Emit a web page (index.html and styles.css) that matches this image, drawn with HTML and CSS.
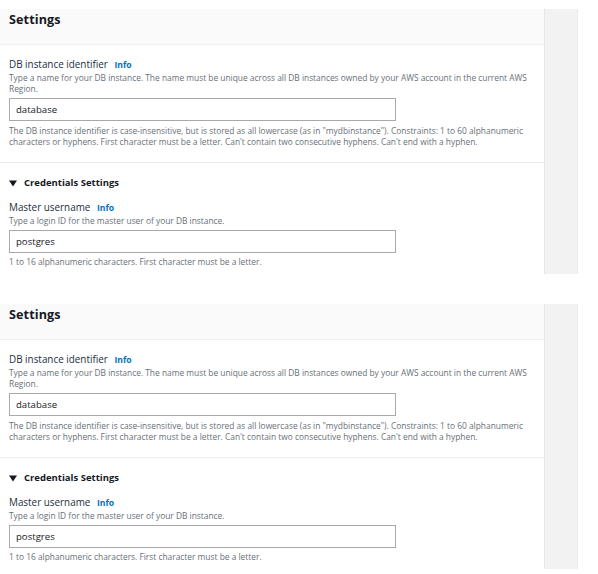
FILE: index.html
```html
<!DOCTYPE html>
<html>
<head>
<meta charset="utf-8">
<link rel="stylesheet" href="styles.css">
</head>
<body>
<div class="page">
  <div class="shot">
    <div class="panel">
      <div class="header"><h2 class="title">Settings</h2></div>
      <div class="section first">
        <div class="label">DB instance identifier <span class="info">Info</span></div>
        <div class="desc">Type a name for your DB instance. The name must be unique across all DB instances owned by your AWS account in the current AWS<br>Region.</div>
        <div class="input">database</div>
        <div class="hint">The DB instance identifier is case-insensitive, but is stored as all lowercase (as in "mydbinstance"). Constraints: 1 to 60 alphanumeric<br>characters or hyphens. First character must be a letter. Can't contain two consecutive hyphens. Can't end with a hyphen.</div>
      </div>
      <div class="section second">
        <div class="expander"><svg class="caret" width="8" height="7" viewBox="0 0 8 7"><path d="M0 0.5 H8 L4 6.5 Z" fill="#16191f"/></svg>Credentials Settings</div>
        <div class="label mt">Master username <span class="info">Info</span></div>
        <div class="desc">Type a login ID for the master user of your DB instance.</div>
        <div class="input">postgres</div>
        <div class="hint short">1 to 16 alphanumeric characters. First character must be a letter.</div>
      </div>
    </div>
    <div class="side"></div>
  </div>
  <div class="shot">
    <div class="panel">
      <div class="header"><h2 class="title">Settings</h2></div>
      <div class="section first">
        <div class="label">DB instance identifier <span class="info">Info</span></div>
        <div class="desc">Type a name for your DB instance. The name must be unique across all DB instances owned by your AWS account in the current AWS<br>Region.</div>
        <div class="input">database</div>
        <div class="hint">The DB instance identifier is case-insensitive, but is stored as all lowercase (as in "mydbinstance"). Constraints: 1 to 60 alphanumeric<br>characters or hyphens. First character must be a letter. Can't contain two consecutive hyphens. Can't end with a hyphen.</div>
      </div>
      <div class="section second">
        <div class="expander"><svg class="caret" width="8" height="7" viewBox="0 0 8 7"><path d="M0 0.5 H8 L4 6.5 Z" fill="#16191f"/></svg>Credentials Settings</div>
        <div class="label mt">Master username <span class="info">Info</span></div>
        <div class="desc">Type a login ID for the master user of your DB instance.</div>
        <div class="input">postgres</div>
        <div class="hint short">1 to 16 alphanumeric characters. First character must be a letter.</div>
      </div>
    </div>
    <div class="side"></div>
  </div>
</div>
</body>
</html>
```

FILE: styles.css
```css
html, body {
  margin: 0;
  padding: 0;
  background: #ffffff;
}
body {
  font-family: "Open Sans", "Noto Sans", sans-serif;
  color: #16191f;
  width: 598px;
  height: 574px;
  overflow: hidden;
}
.page {
  padding-top: 9px;
  display: flex;
  flex-direction: column;
  gap: 30px;
}
.shot {
  display: flex;
  height: 265px;
}
.panel {
  width: 544px;
  background: #ffffff;
  display: flex;
  flex-direction: column;
}
.side {
  width: 34px;
  background: #f2f2f2;
  border-left: 1px solid #e6e6e6;
  border-right: 1px solid #ebebeb;
  box-sizing: border-box;
}
.header {
  height: 36px;
  background: #fafafa;
  border-bottom: 1px solid #f0f0f0;
  box-sizing: border-box;
  padding: 1px 9px 0;
}
.title {
  margin: 0;
  font-size: 12.6px;
  line-height: 20px;
  font-weight: 700;
  letter-spacing: 0.1px;
}
.section {
  padding: 0 9px;
}
.section.first {
  padding-top: 13px;
  padding-bottom: 15px;
  border-bottom: 1px solid #eaeded;
}
.section.second {
  padding-top: 13px;
}
.label {
  font-size: 9.9px;
  line-height: 13px;
  white-space: nowrap;
  color: #232f3e;
}
.label.mt {
  margin-top: 11px;
}
.info {
  color: #0073bb;
  font-weight: 700;
  font-size: 8.6px;
  margin-left: 4px;
}
.desc, .hint {
  font-size: 8.4px;
  line-height: 11px;
  color: #687078;
  white-space: nowrap;
}
.input {
  margin-top: 4px;
  width: 387px;
  height: 23px;
  box-sizing: border-box;
  border: 1px solid #a9a9a9;
  padding: 0 6px;
  font-size: 9.6px;
  line-height: 21px;
  color: #16191f;
}
.hint {
  margin-top: 4px;
}
.hint.short {
  margin-top: 3px;
}
.expander {
  font-size: 9.5px;
  line-height: 14px;
  font-weight: 700;
  display: flex;
  align-items: center;
  gap: 7px;
}
.caret {
  display: block;
}
```
